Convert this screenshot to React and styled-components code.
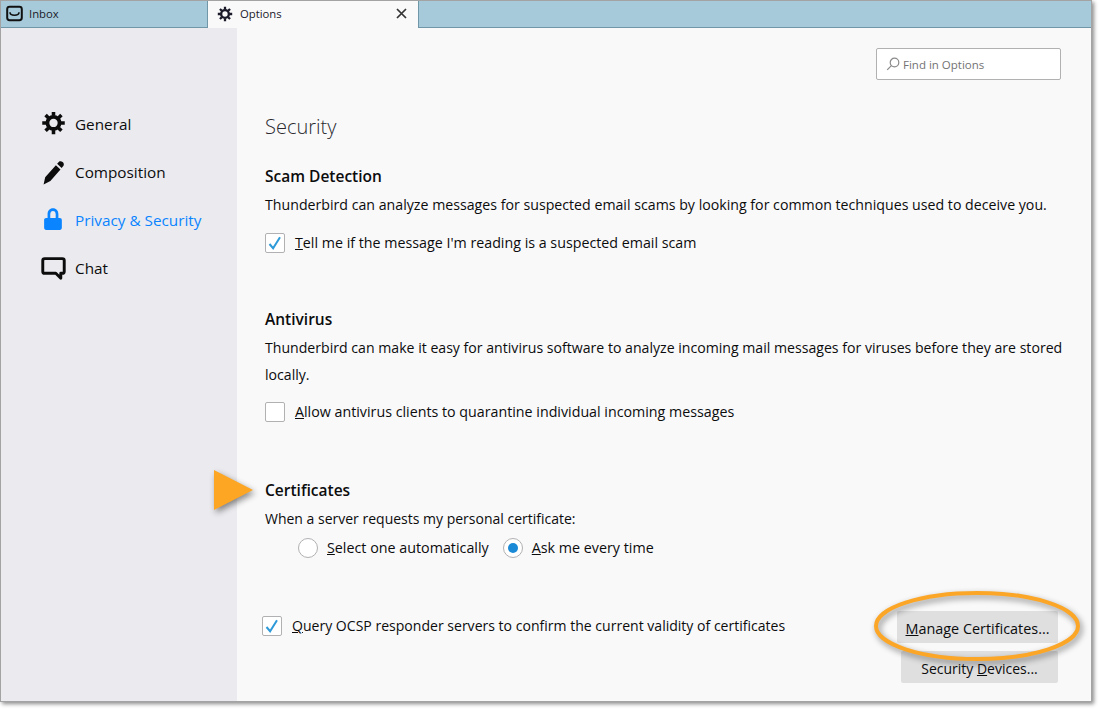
import React from 'react';
import styled, { createGlobalStyle } from 'styled-components';

const GlobalStyle = createGlobalStyle`
  html, body {
    margin: 0;
    padding: 0;
    background: #fff;
    font-family: "Open Sans", "Noto Sans", sans-serif;
    color: #0c0c0d;
  }
`;

const Page = styled.div`
  position: relative;
  width: 1099px;
  height: 710px;
  overflow: hidden;
`;

const Window = styled.div`
  width: 1092px;
  height: 702px;
  box-sizing: border-box;
  border: 1px solid #a3a3a3;
  box-shadow: 2px 2px 4px rgba(0, 0, 0, 0.45);
  display: flex;
  flex-direction: column;
  background: #f9f9fa;
`;

const TabBar = styled.div`
  height: 27px;
  flex: none;
  box-sizing: border-box;
  display: flex;
  background: #a6cad9;
  border-bottom: 1px solid #6f97a8;
`;

const Tab = styled.div`
  width: ${p => p.$width}px;
  height: ${p => (p.$active ? 27 : 26)}px;
  box-sizing: border-box;
  display: flex;
  align-items: center;
  gap: ${p => (p.$active ? 7 : 6)}px;
  padding: 0 10px ${p => (p.$active ? 2 : 1)}px ${p => (p.$active ? 9 : 5)}px;
  font-size: 11.3px;
  color: #1a1a2a;
  background: ${p => (p.$active ? '#f9f9fa' : 'transparent')};
  ${p => p.$active && 'border-left: 1px solid #6f97a8; border-right: 1px solid #6f97a8;'}
`;

const TabLabel = styled.span`
  flex: 1;
`;

const Body = styled.div`
  flex: 1;
  display: flex;
  min-height: 0;
`;

const Sidebar = styled.nav`
  width: 236px;
  flex: none;
  box-sizing: border-box;
  padding: 80px 0 0 40px;
  background: #ebebef;
  display: flex;
  flex-direction: column;
  gap: 16px;
`;

const NavItem = styled.div`
  height: 32px;
  display: flex;
  align-items: center;
  gap: 9px;
  font-size: 15.3px;
  color: ${p => (p.$active ? '#0a84ff' : '#0c0c0d')};
`;

const NavIcon = styled.svg`
  width: 25px;
  height: 25px;
  flex: none;
  fill: currentColor;
`;

const Main = styled.main`
  flex: 1;
  box-sizing: border-box;
  padding: 20px 28px 0;
  display: flex;
  flex-direction: column;
`;

const SearchBox = styled.div`
  align-self: flex-end;
  margin-right: 2px;
  width: 185px;
  height: 32px;
  box-sizing: border-box;
  display: flex;
  align-items: center;
  gap: 3px;
  padding-left: 9px;
  background: #fff;
  border: 1px solid #b1b1b3;
  border-radius: 2px;
  font-size: 11.5px;
  color: #737373;
`;

const PageTitle = styled.h1`
  margin: 31px 0 0;
  height: 32px;
  line-height: 32px;
  font-size: 20px;
  font-weight: 300;
  color: #2a2a2e;
`;

const Section = styled.section`
  margin-top: ${p => p.$top}px;
`;

const SectionTitle = styled.h2`
  margin: 0;
  height: 30px;
  line-height: 30px;
  font-size: 15.5px;
  font-weight: 600;
  color: #0c0c0d;
`;

const Text = styled.p`
  margin: 0;
  font-size: ${p => p.$size || 14}px;
  line-height: 27px;
`;

const CheckRow = styled.label`
  display: flex;
  align-items: center;
  gap: 10px;
  height: 27px;
  margin-top: ${p => p.$top || 10}px;
  font-size: 14.25px;
`;

const Box = styled.span`
  width: 20px;
  height: 20px;
  flex: none;
  box-sizing: border-box;
  display: flex;
  align-items: center;
  justify-content: center;
  background: #fff;
  border: 1px solid #b1b1b3;
  border-radius: 2px;
`;

const AccessKey = styled.span`
  text-decoration: underline;
`;

const RadioRow = styled.div`
  display: flex;
  align-items: center;
  height: 27px;
  margin-top: 2px;
  padding-left: 33px;
  font-size: 14.3px;
`;

const Radio = styled.span`
  width: 20px;
  height: 20px;
  flex: none;
  box-sizing: border-box;
  margin-right: 9px;
  margin-left: ${p => p.$gap || 0}px;
  border-radius: 50%;
  background: #fff;
  border: 1px solid #b1b1b3;
  display: flex;
  align-items: center;
  justify-content: center;
  &::after {
    content: '';
    display: ${p => (p.$checked ? 'block' : 'none')};
    width: 10px;
    height: 10px;
    border-radius: 50%;
    background: #1a8ad6;
  }
`;

const BottomRow = styled.div`
  margin-top: 51px;
  display: flex;
  justify-content: space-between;
  align-items: flex-start;
`;

const QueryRow = styled(CheckRow)`
  margin: 0 0 0 -3px;
  font-size: 14.05px;
`;

const ButtonStack = styled.div`
  display: flex;
  flex-direction: column;
  align-items: flex-end;
  gap: 8px;
  margin: -1px 5px 0 0;
`;

const Button = styled.button`
  width: ${p => p.$width}px;
  height: 32px;
  border: none;
  border-radius: 2px;
  padding: 2px 0 0;
  background: #dfdfe0;
  color: #0c0c0d;
  font-family: inherit;
  font-size: ${p => p.$size || 14}px;
`;

const Arrow = styled.svg`
  position: absolute;
  left: 205px;
  top: 462px;
  width: 60px;
  height: 60px;
  overflow: visible;
  filter: drop-shadow(2px 3px 3px rgba(0, 0, 0, 0.45));
`;

const Halo = styled.svg`
  position: absolute;
  left: 870px;
  top: 587px;
  width: 214px;
  height: 78px;
  overflow: visible;
  filter: drop-shadow(2px 3px 3px rgba(0, 0, 0, 0.45));
`;

const Gear = ({ size = 25, lift = 0 }) => (
  <svg width={size} height={size} viewBox={`0 ${lift} 24 24`} fill="none" stroke="currentColor" style={{ flex: 'none' }}>
    <circle cx="12" cy="12" r="5.8" strokeWidth="3.6" />
    <path
      strokeWidth="3.4"
      d="M12 1.2v4M12 18.8v4M1.2 12h4M18.8 12h4M4.4 4.4l2.8 2.8M16.8 16.8l2.8 2.8M4.4 19.6l2.8-2.8M16.8 7.2l2.8-2.8"
    />
  </svg>
);

const CheckMark = () => (
  <svg width="16" height="16" viewBox="0 0 16 16" fill="none" stroke="#2e9ad8" strokeWidth="2">
    <path d="M2.5 9l3.6 4.2L13 2.2" />
  </svg>
);

export default function App() {
  return (
    <Page>
      <GlobalStyle />
      <Window>
        <TabBar>
          <Tab $width={206}>
            <svg width="17" height="17" viewBox="0 0 17 17" fill="none" stroke="#111" strokeWidth="2" style={{ flex: 'none' }}>
              <rect x="1.2" y="1.8" width="14.6" height="13.4" rx="2.4" />
              <path strokeWidth="1.6" d="M4 7.2c0 2.2 2 3 4.500 3s4.500-.8 4.500-3" />
            </svg>
            <TabLabel>Inbox</TabLabel>
          </Tab>
          <Tab $active $width={212}>
            <Gear size={16} />
            <TabLabel>Options</TabLabel>
            <svg width="11" height="11" viewBox="0 0 11 11" stroke="#333" strokeWidth="1.7" style={{ marginRight: 1 }}>
              <path d="M1 1l9 9M10 1l-9 9" />
            </svg>
          </Tab>
        </TabBar>
        <Body>
          <Sidebar>
            <NavItem>
              <Gear lift={1.5} />
              General
            </NavItem>
            <NavItem>
              <NavIcon viewBox="0 0 24 24">
                <path d="M17.500 1.500c1-.7 2.300-.4 3.300.5 1.100 1 1.500 2.400.8 3.500l-1.800 2.200-4.300-4zM14.300 5l4.400 4L9 20.200l-6.500 3.300 1.500-7z" />
              </NavIcon>
              Composition
            </NavItem>
            <NavItem $active>
              <NavIcon viewBox="0 0 24 24">
                <path d="M11.500.3c-3.200 0-5.200 2.400-5.200 5.700v3.500H5c-1.300 0-2 .8-2 2V19c0 1.200.7 2 2 2h13c1.300 0 2-.8 2-2v-7.500c0-1.200-.7-2-2-2h-1.300V6c0-3.300-2-5.700-5.200-5.700zM8.900 9.500V6c0-1.900 1-3.100 2.600-3.100s2.600 1.200 2.600 3.100v3.500z" />
              </NavIcon>
              Privacy &amp; Security
            </NavItem>
            <NavItem>
              <svg width="25" height="25" viewBox="0 0 24 24" fill="none" stroke="currentColor" strokeWidth="2.800" strokeLinejoin="round" style={{ flex: 'none' }}>
                <path d="M3.500 2.500h17c1 0 1.800.8 1.800 1.800v10.500c0 1-.8 1.800-1.800 1.800h-1.500v4.800l-4.800-4.800H3.500c-1 0-1.800-.8-1.800-1.800V4.300c0-1 .8-1.800 1.800-1.800z" />
              </svg>
              Chat
            </NavItem>
          </Sidebar>
          <Main>
            <SearchBox>
              <svg width="14" height="14" viewBox="0 0 14 14" fill="none" stroke="#8a8a8a" strokeWidth="1.200">
                <circle cx="8.500" cy="5.500" r="4.300" />
                <path d="M5.400 8.600L1.200 12.800" />
              </svg>
              Find in Options
            </SearchBox>
            <PageTitle>Security</PageTitle>
            <Section $top={18}>
              <SectionTitle>Scam Detection</SectionTitle>
              <Text $size={14.18}>Thunderbird can analyze messages for suspected email scams by looking for common techniques used to deceive you.</Text>
              <CheckRow $top={11}>
                <Box><CheckMark /></Box>
                <span><AccessKey>T</AccessKey>ell me if the message I'm reading is a suspected email scam</span>
              </CheckRow>
            </Section>
            <Section $top={48}>
              <SectionTitle>Antivirus</SectionTitle>
              <Text $size={14.12}>Thunderbird can make it easy for antivirus software to analyze incoming mail messages for viruses before they are stored locally.</Text>
              <CheckRow>
                <Box />
                <span><AccessKey>A</AccessKey>llow antivirus clients to quarantine individual incoming messages</span>
              </CheckRow>
            </Section>
            <Section $top={50}>
              <SectionTitle>Certificates</SectionTitle>
              <Text>When a server requests my personal certificate:</Text>
              <RadioRow>
                <Radio />
                <span><AccessKey>S</AccessKey>elect one automatically</span>
                <Radio $checked $gap={14} />
                <span><AccessKey>A</AccessKey>sk me every time</span>
              </RadioRow>
            </Section>
            <BottomRow>
              <QueryRow>
                <Box><CheckMark /></Box>
                <span><AccessKey>Q</AccessKey>uery OCSP responder servers to confirm the current validity of certificates</span>
              </QueryRow>
              <ButtonStack>
                <Button $width={161} $size={14.4}><AccessKey>M</AccessKey>anage Certificates...</Button>
                <Button $width={157}>Security <AccessKey>D</AccessKey>evices...</Button>
              </ButtonStack>
            </BottomRow>
          </Main>
        </Body>
      </Window>
      <Arrow viewBox="0 0 60 60">
        <path d="M9 8l39 20L9 48z" fill="#fca624" />
      </Arrow>
      <Halo viewBox="0 0 214 78">
        <ellipse cx="107" cy="39" rx="101" ry="33" fill="none" stroke="#fba627" strokeWidth="4" />
      </Halo>
    </Page>
  );
}
